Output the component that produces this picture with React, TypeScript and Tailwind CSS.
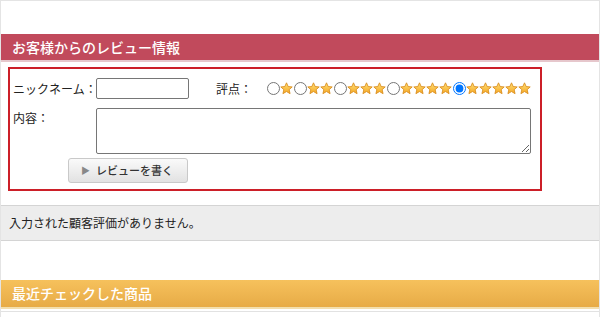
import React from 'react';

const font = { fontFamily: '"Noto Sans CJK JP", "Liberation Sans", sans-serif' };

function Star() {
  return (
    <svg width="13" height="13" viewBox="0 0 24 24" className="block shrink-0">
      <defs>
        <linearGradient id="sg" x1="0" y1="0" x2="0" y2="1">
          <stop offset="0" stopColor="#ffe27a" />
          <stop offset="1" stopColor="#f5a623" />
        </linearGradient>
      </defs>
      <path
        d="M12 1.5l3.1 6.9 7.4.7-5.6 5 1.7 7.4L12 17.6 5.4 21.5l1.7-7.4-5.6-5 7.4-.7z"
        fill="url(#sg)"
        stroke="#d98c1c"
        strokeWidth="1.6"
        strokeLinejoin="round"
      />
    </svg>
  );
}

function Radio({ checked }: { checked?: boolean }) {
  return (
    <input
      type="radio"
      name="rating"
      defaultChecked={checked}
      className="m-0 h-[13px] w-[13px] shrink-0 accent-[#0075ff]"
    />
  );
}

export default function App() {
  const ratings = [1, 2, 3, 4, 5];
  return (
    <div
      className="h-[317px] w-[600px] overflow-hidden border-x border-t border-[#e4e4e4] bg-white text-[12px] text-[#222]"
      style={font}
    >
      <div className="h-[33px]" />
      <div className="flex h-[28px] items-center border-b-2 border-[#e6c7cc] bg-[#c14a5c] pl-[11px] text-[14px] font-medium text-white">
        お客様からのレビュー情報
      </div>

      <div className="ml-[7px] mt-[5px] h-[124px] w-[534px] border-2 border-[#cc1f28] pl-[3px] pt-[9px]">
        <div className="flex h-[21px] items-center whitespace-nowrap">
          <span className="w-[83px] shrink-0">ニックネーム：</span>
          <input
            type="text"
            className="h-[21px] w-[93px] shrink-0 rounded-[2px] border border-[#767676] bg-white"
          />
          <span className="ml-[27px] w-[50px] shrink-0">評点：</span>
          <div className="flex items-center">
            {ratings.map((n) => (
              <div key={n} className="flex items-center">
                <span className="flex w-[14px] justify-center">
                  <Radio checked={n === 5} />
                </span>
                {Array.from({ length: n }).map((_, i) => (
                  <span key={i} className="flex w-[13px] justify-center">
                    <Star />
                  </span>
                ))}
              </div>
            ))}
          </div>
        </div>

        <div className="mt-[9px] flex">
          <span className="w-[83px] shrink-0 pt-[1px] leading-[18px]">内容：</span>
          <textarea className="h-[46px] w-[435px] resize-y rounded-[2px] border border-[#767676] bg-white" />
        </div>

        <div className="ml-[55px] mt-[4px]">
          <button className="flex h-[25px] w-[120px] items-center rounded-[3px] border border-[#c9c9c9] bg-gradient-to-b from-[#fafafa] to-[#e2e2e2] pl-[12px] text-[11px] font-medium text-[#333]">
            <span className="mr-[6px] text-[9px] text-[#888]">▶</span>
            レビューを書く
          </button>
        </div>
      </div>

      <div className="mt-[14px] flex h-[36px] items-center border-y border-[#d4d4d4] bg-[#ededed] pl-[8px] text-[12px]">
        入力された顧客評価がありません。
      </div>

      <div className="h-[39px]" />
      <div className="flex h-[29px] items-center border-b-2 border-[#f3dfae] bg-gradient-to-b from-[#f6c15c] to-[#e7ab46] pl-[11px] text-[14px] font-medium text-white">
        最近チェックした商品
      </div>
      <div className="mt-[2px] border-t border-[#e2e2e2]" />
    </div>
  );
}
